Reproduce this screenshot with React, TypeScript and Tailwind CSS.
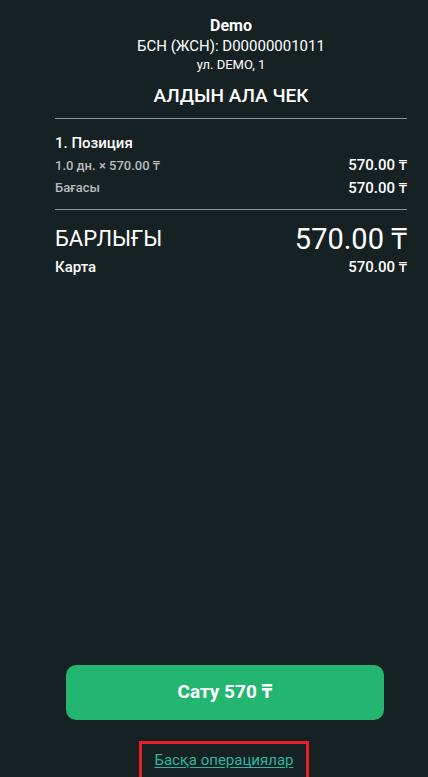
export default function App() {
  return (
    <div className="w-[428px] h-[777px] bg-[#162124] text-white flex flex-col overflow-hidden" style={{ fontFamily: "Roboto, 'Noto Sans', sans-serif" }}>
      <div className="pl-[55px] pr-[21px] pt-[15px]">
        <div className="flex flex-col items-center">
          <div className="text-[16px] font-bold leading-[21px]">Demo</div>
          <div className="text-[15px] leading-[20px]">БСН (ЖСН): D00000001011</div>
          <div className="text-[13px] leading-[16px] mt-[1px]">ул. DEMO, 1</div>
          <div className="text-[19px] font-medium leading-[24px] mt-[11px]">АЛДЫН АЛА ЧЕК</div>
        </div>
        <div className="h-px bg-[#8a9395] mt-[10px]" />
        <div className="pt-[14px]">
          <div className="text-[15px] font-medium leading-[20px]">1. Позиция</div>
          <div className="flex justify-between items-center mt-[1px]">
            <span className="text-[13px] font-medium text-[#b6bbbd]">1.0 дн. × 570.00 ₸</span>
            <span className="text-[15px] font-medium">570.00 ₸</span>
          </div>
          <div className="flex justify-between items-center">
            <span className="text-[13px] font-medium text-[#b6bbbd]">Бағасы</span>
            <span className="text-[15px] font-medium">570.00 ₸</span>
          </div>
        </div>
        <div className="h-px bg-[#8a9395] mt-[10px]" />
        <div className="flex justify-between items-center mt-[13px]">
          <span className="text-[22px] leading-[30px]">БАРЛЫҒЫ</span>
          <span className="text-[29px] leading-[32px]">570.00 ₸</span>
        </div>
        <div className="flex justify-between items-center mt-[1px]">
          <span className="text-[15px] font-medium">Карта</span>
          <span className="text-[15px] font-medium">570.00 ₸</span>
        </div>
      </div>
      <div className="flex-1" />
      <div className="pl-[66px] pr-[44px]">
        <button className="w-full h-[55px] rounded-[10px] bg-[#22b670] text-white text-[19px] font-bold">Сату 570 ₸</button>
      </div>
      <div className="flex justify-center pl-[20px] mt-[21px] mb-[-1px]">
        <div className="border-[3px] border-[#ee1c25] border-b-0 px-[13px] pt-[4px] pb-[6px]">
          <span className="text-[15px] text-[#2bb5a0] underline underline-offset-2">Басқа операциялар</span>
        </div>
      </div>
    </div>
  );
}
